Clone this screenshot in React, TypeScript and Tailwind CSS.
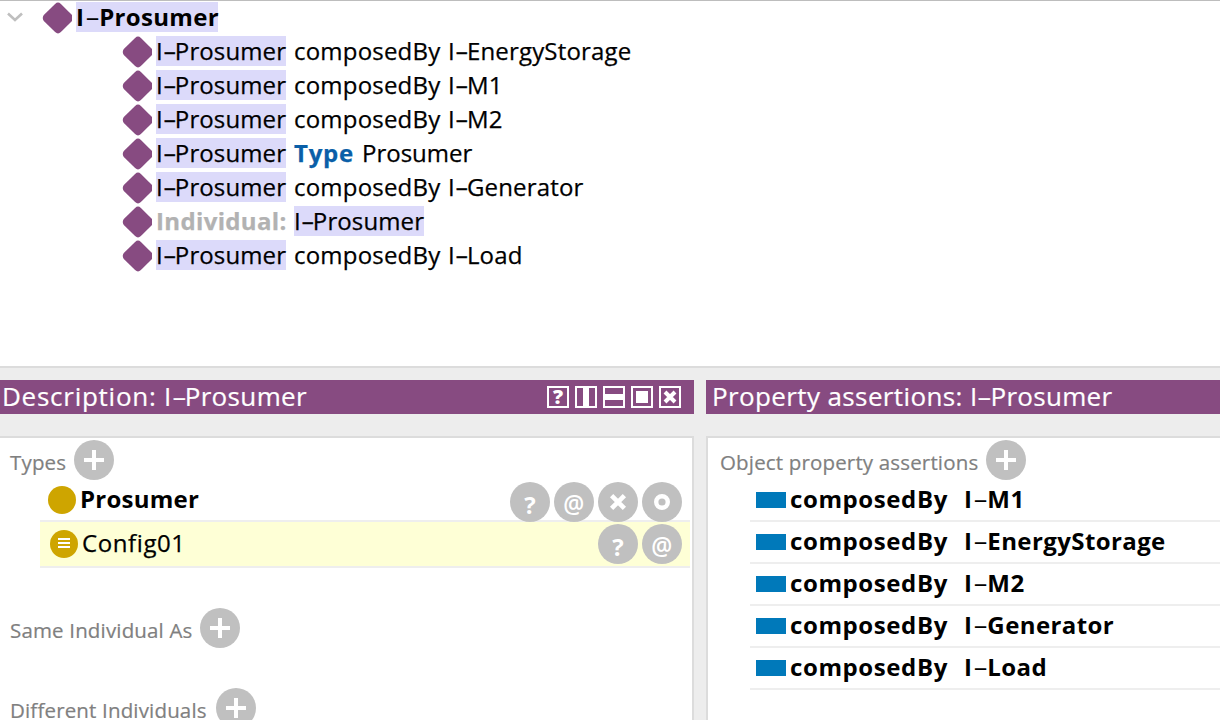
import type { ReactNode } from "react";

const PURPLE = "#874b81";

/** Entity name such as I-Prosumer, drawn with a wide hyphen. */
function Name({
  children,
  hyphen = "w-[12px] scale-x-[1.75]",
}: {
  children: string;
  hyphen?: string;
}) {
  const [head, tail] = children.split("-");
  return (
    <>
      {head}
      <span className={`inline-block origin-left ${hyphen}`}>-</span>
      {tail}
    </>
  );
}

const BOLD_HYPHEN = "w-[15px] translate-x-[1px] scale-x-[1.95] font-medium";

function Diamond() {
  return (
    <svg width="30" height="32" viewBox="0 0 30 32" className="shrink-0">
      <path
        d="M13.1 2 Q16 -.8 18.9 2 L30.2 13.1 Q32.5 16 30.2 18.9 L18.9 30 Q16 32.8 13.1 30 L1.8 18.9 Q-.3 16 1.8 13.1 Z"
        fill={PURPLE}
      />
    </svg>
  );
}

function Mark({ children, className = "w-[130px]" }: { children: ReactNode; className?: string }) {
  return <span className={`block h-[30px] shrink-0 bg-[#dcdafa] ${className}`}>{children}</span>;
}

function UsageRow({ children }: { children: ReactNode }) {
  return (
    <div className="flex h-[34px] items-start pl-[122px] pt-px tracking-[0.12px] [-webkit-text-stroke:0.25px]">
      <Diamond />
      <div className="ml-1 flex h-[30px]">{children}</div>
    </div>
  );
}

function Composed({ name }: { name: string }) {
  return (
    <UsageRow>
      <Mark>
        <Name>I-Prosumer</Name>
      </Mark>
      <span className="ml-2 w-[154px] tracking-[0.2px]">composedBy</span>
      <span className="tracking-[0.18px]">
        <Name>{name}</Name>
      </span>
    </UsageRow>
  );
}

function AddButton() {
  return (
    <svg width="40" height="40" viewBox="0 0 40 40" className="shrink-0">
      <circle cx="20" cy="20" r="20" fill="#c0c0c0" />
      <path d="M10 20H30M20 10V30" stroke="#fff" strokeWidth="4" />
    </svg>
  );
}

function RoundButton({ kind }: { kind: "help" | "at" | "remove" | "edit" }) {
  return (
    <span className="flex size-10 shrink-0 items-center justify-center rounded-full bg-[#c0c0c0] text-white">
      {kind === "help" && <span className="mt-[5px] text-[24px] font-bold leading-none">?</span>}
      {kind === "at" && (
        <span className="mt-[2px] scale-x-90 text-[26px] font-semibold leading-none">@</span>
      )}
      {kind === "remove" && (
        <svg width="20" height="20" viewBox="0 0 20 20">
          <path d="M3.6 3.6L16.4 16.4M16.4 3.6L3.6 16.4" stroke="#fff" strokeWidth="4.6" />
        </svg>
      )}
      {kind === "edit" && (
        <svg width="20" height="20" viewBox="0 0 20 20">
          <circle cx="10" cy="10" r="5.8" fill="none" stroke="#fff" strokeWidth="4.4" />
        </svg>
      )}
    </span>
  );
}

function ViewButton({ kind }: { kind: "help" | "vsplit" | "hsplit" | "float" | "close" }) {
  return (
    <span className="flex size-[22px] items-center justify-center border-2 border-white">
      {kind === "help" && <span className="text-[20px] font-extrabold leading-none">?</span>}
      {kind === "vsplit" && <span className="h-[18px] w-[6px] bg-white" />}
      {kind === "hsplit" && <span className="h-[6px] w-[18px] bg-white" />}
      {kind === "float" && <span className="size-3 bg-white" />}
      {kind === "close" && (
        <svg width="18" height="18" viewBox="0 0 18 18">
          <path d="M4 4L14 14M14 4L4 14" stroke="#fff" strokeWidth="4" />
        </svg>
      )}
    </span>
  );
}

function SectionHead({ title, width }: { title: string; width: string }) {
  return (
    <div className="flex h-10 items-start text-[20.5px] leading-[30px] tracking-[0.16px] text-[#808080] [-webkit-text-stroke:0.2px]">
      <span className={`mt-[7px] shrink-0 whitespace-nowrap ${width}`}>{title}</span>
      <AddButton />
    </div>
  );
}

function PropertyRow({ name }: { name: string }) {
  return (
    <div className="ml-[42px] flex h-[42px] items-start border-b-2 border-[#eeeeee] pl-[6px] font-bold">
      <span className="mt-[12px] h-4 w-[30px] shrink-0 bg-[#0079ba]" />
      <span className="ml-1 mt-[4px] w-[174px] shrink-0 tracking-[0.6px]">composedBy</span>
      <span className="mt-[4px] tracking-[0.4px]">
        <Name hyphen={BOLD_HYPHEN}>{name}</Name>
      </span>
    </div>
  );
}

export default function App() {
  return (
    <div className="flex h-[720px] w-[1220px] flex-col overflow-hidden bg-[#ededed] font-['Open_Sans','Noto_Sans',sans-serif] text-[24px] leading-[30px] text-black">
      <section className="h-[368px] shrink-0 border-b-2 border-t border-b-[#dcdcdc] border-t-[#bdbdbd] bg-white whitespace-nowrap">
        <div className="flex h-[34px] items-start pl-[7px] pt-px font-bold">
          <svg width="16" height="12" viewBox="0 0 16 12" className="mt-[9px]">
            <path d="M1 2.5L8 9L15 2.5" fill="none" stroke="#bfbfbf" strokeWidth="2.6" />
          </svg>
          <span className="ml-[19px]">
            <Diamond />
          </span>
          <span className="ml-1 tracking-[0.3px]">
            <Mark className="w-[142px]">
              <Name hyphen={BOLD_HYPHEN}>I-Prosumer</Name>
            </Mark>
          </span>
        </div>
        <Composed name="I-EnergyStorage" />
        <Composed name="I-M1" />
        <Composed name="I-M2" />
        <UsageRow>
          <Mark>
            <Name>I-Prosumer</Name>
          </Mark>
          <span className="ml-2 w-[68px] font-bold tracking-[0.75px] text-[#0a5fa8]">Type</span>
          <span className="tracking-normal">Prosumer</span>
        </UsageRow>
        <Composed name="I-Generator" />
        <UsageRow>
          <span className="w-[138px] font-bold tracking-[0.35px] text-[#b2b2b2]">Individual:</span>
          <Mark>
            <Name>I-Prosumer</Name>
          </Mark>
        </UsageRow>
        <Composed name="I-Load" />
      </section>

      <main className="flex min-h-0 flex-1 gap-3 pt-3">
        <section className="flex w-[694px] shrink-0 flex-col">
          <header className="flex h-[34px] shrink-0 items-center justify-between bg-[#874b81] pl-[2px] pr-[13px] text-[26px] text-white">
            <span className="pb-[2px] tracking-[0.35px] [-webkit-text-stroke:0.2px]">
              <span className="tracking-[0.74px]">Description: </span>
              <Name hyphen="w-[13px] scale-x-[1.75]">I-Prosumer</Name>
            </span>
            <span className="flex gap-[6px]">
              <ViewButton kind="help" />
              <ViewButton kind="vsplit" />
              <ViewButton kind="hsplit" />
              <ViewButton kind="float" />
              <ViewButton kind="close" />
            </span>
          </header>
          <div className="mt-[22px] flex-1 border-r-2 border-t-2 border-[#dcdcdc] bg-white pl-[10px] pt-[2px]">
            <SectionHead title="Types" width="w-[64px]" />
            <div className="ml-[30px] mr-[2px] flex h-[42px] items-start justify-between border-b-2 border-[#eeeeee] pl-2 pr-2">
              <span className="flex items-start">
                <span className="mt-[6px] size-7 rounded-full bg-[#cea500]" />
                <span className="ml-1 mt-[4px] font-bold tracking-[0.25px]">Prosumer</span>
              </span>
              <span className="relative z-10 mt-[2px] flex gap-1">
                <RoundButton kind="help" />
                <RoundButton kind="at" />
                <RoundButton kind="remove" />
                <RoundButton kind="edit" />
              </span>
            </div>
            <div className="ml-[30px] mr-[2px] flex h-[46px] items-start justify-between border-b-2 border-[#eeeeee] bg-[#feffd6] pl-[10px] pr-2">
              <span className="flex items-start">
                <svg width="28" height="28" viewBox="0 0 28 28" className="mt-2">
                  <circle cx="14" cy="14" r="14" fill="#cea500" />
                  <path d="M8 9H20M8 13H20M8 17H20" stroke="#fff" strokeWidth="2" />
                </svg>
                <span className="ml-1 mt-[6px] tracking-[0.6px] [-webkit-text-stroke:0.25px]">Config01</span>
              </span>
              <span className="mt-[2px] flex gap-1">
                <RoundButton kind="help" />
                <RoundButton kind="at" />
              </span>
            </div>
            <div className="mt-10">
              <SectionHead title="Same Individual As" width="w-[190px]" />
            </div>
            <div className="mt-10">
              <SectionHead title="Different Individuals" width="w-[206px]" />
            </div>
          </div>
        </section>

        <section className="flex min-w-0 flex-1 flex-col">
          <header className="flex h-[34px] shrink-0 items-center bg-[#874b81] pl-[6px] text-[26px] text-white">
            <span className="pb-[2px] tracking-[0.3px] [-webkit-text-stroke:0.2px]">
              <span className="tracking-[0.38px]">Property assertions: </span>
              <Name hyphen="w-[13px] scale-x-[1.75]">I-Prosumer</Name>
            </span>
          </header>
          <div className="mt-[22px] flex-1 border-l-2 border-t-2 border-[#dcdcdc] bg-white pt-[2px]">
            <div className="pl-3">
              <SectionHead title="Object property assertions" width="w-[266px]" />
            </div>
            <PropertyRow name="I-M1" />
            <PropertyRow name="I-EnergyStorage" />
            <PropertyRow name="I-M2" />
            <PropertyRow name="I-Generator" />
            <PropertyRow name="I-Load" />
          </div>
        </section>
      </main>
    </div>
  );
}
